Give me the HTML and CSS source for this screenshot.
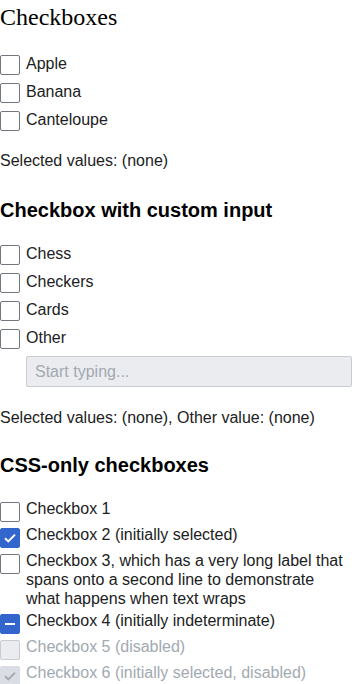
FILE: index.html
```html
<!DOCTYPE html>
<html lang="en">
	<head>
		<meta charset="UTF-8">
		<title>Checkboxes</title>
		<link rel="stylesheet" href="styles.css">
	</head>
	<body>
		<h2 class="page-title">Checkboxes</h2>
		<div class="options">
			<label class="checkbox"><span class="checkbox-icon"></span><span class="checkbox-label">Apple</span></label>
			<label class="checkbox"><span class="checkbox-icon"></span><span class="checkbox-label">Banana</span></label>
			<label class="checkbox"><span class="checkbox-icon"></span><span class="checkbox-label">Canteloupe</span></label>
		</div>
		<p class="selection">Selected values: (none)</p>

		<h3 class="demo-heading">Checkbox with custom input</h3>
		<div class="options">
			<label class="checkbox"><span class="checkbox-icon"></span><span class="checkbox-label">Chess</span></label>
			<label class="checkbox"><span class="checkbox-icon"></span><span class="checkbox-label">Checkers</span></label>
			<label class="checkbox"><span class="checkbox-icon"></span><span class="checkbox-label">Cards</span></label>
			<label class="checkbox"><span class="checkbox-icon"></span><span class="checkbox-label">Other</span></label>
		</div>
		<input class="custom-input" type="text" placeholder="Start typing..." disabled>
		<p class="selection selection-other">Selected values: (none), Other value: (none)</p>

		<h3 class="demo-heading heading-css">CSS-only checkboxes</h3>
		<div class="options compact">
			<label class="checkbox"><span class="checkbox-icon"></span><span class="checkbox-label">Checkbox 1</span></label>
			<label class="checkbox is-checked">
				<span class="checkbox-icon"><svg width="14" height="14" viewBox="0 0 14 14"><polyline points="2,7.2 5.3,10.4 12,3.6" fill="none" stroke="#fff" stroke-width="2"/></svg></span>
				<span class="checkbox-label">Checkbox 2 (initially selected)</span>
			</label>
			<label class="checkbox"><span class="checkbox-icon"></span><span class="checkbox-label">Checkbox 3, which has a very long label that spans onto a second line to demonstrate what happens when text wraps</span></label>
			<label class="checkbox is-indeterminate">
				<span class="checkbox-icon"><span class="dash"></span></span>
				<span class="checkbox-label">Checkbox 4 (initially indeterminate)</span>
			</label>
			<label class="checkbox is-disabled"><span class="checkbox-icon"></span><span class="checkbox-label">Checkbox 5 (disabled)</span></label>
			<label class="checkbox is-disabled is-checked">
				<span class="checkbox-icon"><svg width="14" height="14" viewBox="0 0 14 14"><polyline points="2,7.2 5.3,10.4 12,3.6" fill="none" stroke="#a2a9b1" stroke-width="2"/></svg></span>
				<span class="checkbox-label">Checkbox 6 (initially selected, disabled)</span>
			</label>
		</div>
	</body>
</html>
```
FILE: styles.css
```css
*{
	box-sizing: border-box;
}
body{
	margin: 0;
	font-family: "Liberation Sans", Arial, sans-serif;
	font-size: 16px;
	color: #202122;
}
.page-title{
	margin: 4px 0 0;
	font-family: "Liberation Serif", "Times New Roman", serif;
	font-size: 24px;
	font-weight: normal;
	line-height: 27px;
	color: #000;
}
.demo-heading{
	margin: 27px 0 0;
	font-size: 20px;
	line-height: 24px;
	font-weight: bold;
	color: #000;
}
.heading-css{
	margin-top: 25px;
}
.options{
	display: flex;
	flex-direction: column;
	gap: 6px;
	margin-top: 22px;
}
.demo-heading + .options{
	margin-top: 21px;
}
.checkbox{
	display: flex;
	align-items: flex-start;
	gap: 6px;
	line-height: 22px;
	cursor: pointer;
}
.checkbox-icon{
	flex: none;
	display: flex;
	align-items: center;
	justify-content: center;
	width: 20px;
	height: 20px;
	margin-top: 2px;
	border: 1px solid #72777d;
	border-radius: 2px;
	background: #fff;
}
.is-checked .checkbox-icon,
.is-indeterminate .checkbox-icon{
	background: #36c;
	border-color: #36c;
}
.dash{
	width: 10px;
	height: 2px;
	background: #fff;
}
.is-disabled{
	color: #a2a9b1;
	cursor: default;
}
.is-disabled .checkbox-icon{
	background: #eaecf0;
	border-color: #c8ccd1;
}
.is-disabled.is-checked .checkbox-icon{
	background: #dadde3;
	border-color: #dadde3;
}
.options.compact{
	gap: 3px;
	margin-top: 22px;
}
.compact .checkbox{
	line-height: 19px;
}
.compact .checkbox-icon{
	margin-top: 3px;
}
.custom-input{
	display: block;
	width: calc(100% - 26px);
	height: 31px;
	margin: 7px 0 0 26px;
	padding: 0 8px;
	border: 1px solid #c8ccd1;
	border-radius: 2px;
	background: #eaecf0;
	font: inherit;
}
.custom-input::placeholder{
	color: #a2a9b1;
}
.selection{
	margin: 20px 0 0;
	line-height: 20px;
}
.selection-other{
	margin-top: 21px;
}
```
